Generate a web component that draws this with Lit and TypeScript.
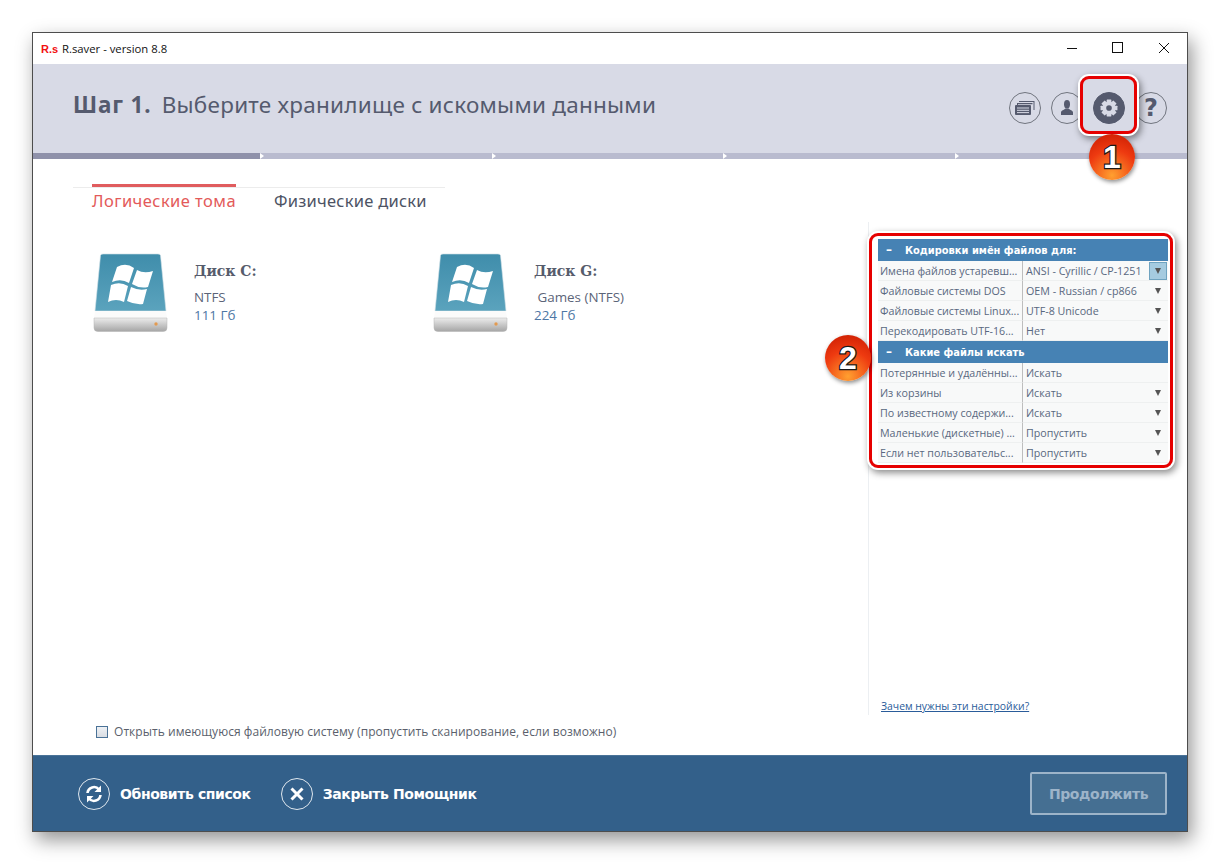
import { LitElement, html, css, svg } from "lit";
import { customElement } from "lit/decorators.js";

const groupA = [
  ["Имена файлов устаревш...", "ANSI - Cyrillic / CP-1251", "sel"],
  ["Файловые системы DOS", "OEM - Russian / cp866", "arrow"],
  ["Файловые системы Linux...", "UTF-8 Unicode", "arrow"],
  ["Перекодировать UTF-16...", "Нет", "arrow"],
];
const groupB = [
  ["Потерянные и удалённы...", "Искать", ""],
  ["Из корзины", "Искать", "arrow"],
  ["По известному содержи...", "Искать", "arrow"],
  ["Маленькие (дискетные) ...", "Пропустить", "arrow"],
  ["Если нет пользовательс...", "Пропустить", "arrow"],
];

const diskIcon = html`<svg class="disk" width="76" height="82" viewBox="0 0 76 82">
  <defs>
    <linearGradient id="dk" x1="0" y1="0" x2="0" y2="1"><stop offset="0" stop-color="#3f8dab"/><stop offset="1" stop-color="#5ba3bd"/></linearGradient>
    <linearGradient id="bs" x1="0" y1="0" x2="0" y2="1"><stop offset="0" stop-color="#ececec"/><stop offset="1" stop-color="#a5a5a5"/></linearGradient>
  </defs>
  <path d="M7.500 2.500 Q7.500 1 10 1 H65 Q67.500 1 67.500 2.500 L73 58 H2 Z" fill="url(#dk)" stroke="#cfdfe6" stroke-width=".6"/>
  <path d="M2 58 H73 L74 65 H1 Z" fill="#fbfbfb"/>
  <path d="M1 65 H74 V75 Q74 78.500 70 78.500 H5 Q1 78.500 1 75 Z" fill="url(#bs)" stroke="#b5b5b5" stroke-width=".5"/>
  <circle cx="63" cy="71" r="1.700" fill="#e39a50"/>
  <g fill="#fff">
    <path d="M24 14 Q33 9 41 15 L36 30 Q28 25 19 29 Z"/>
    <path d="M44 17 Q51 21 60 18 L55 34 Q47 36 39 31 Z"/>
    <path d="M18 32 Q27 28 35 33 L31 49 Q23 45 15 49 Z"/>
    <path d="M38 34 Q46 38 54 36 L50 51 Q42 52 34 48 Z"/>
  </g>
</svg>`;

const gearTeeth = [0, 45, 90, 135, 180, 225, 270, 315].map(
  (a) => svg`<rect x="13.500" y="7" width="5" height="3.500" rx=".5" fill="#d8dae6" transform="rotate(${a} 16 16)"/>`
);

@customElement("app-root")
export class AppRoot extends LitElement {
  static styles = css`
    :host { display: block; width: 1220px; height: 864px; padding: 32px 0 0 32px; box-sizing: border-box; background: #fff; overflow: hidden; font-family: "DejaVu Sans", sans-serif; }
    .win { position: relative; width: 1156px; height: 800px; box-sizing: border-box; border: 1px solid #4d4d4d; background: #fff; display: flex; flex-direction: column; box-shadow: 4px 8px 18px rgba(0,0,0,.42); }
    .titlebar { height: 31px; flex: none; display: flex; align-items: center; padding-left: 8px; font: 11.3px "Open Sans", sans-serif; color: #111; background: #fff; }
    .logo { width: 21px; color: #f21010; font: 700 11px "Liberation Sans", sans-serif; }
    .controls { margin-left: auto; display: flex; height: 100%; align-items: center; }
    .controls svg { display: block; width: 46px; height: 31px; }
    .header { height: 89px; flex: none; background: #d8dae6; display: flex; align-items: center; padding: 0 20px 0 40px; color: #555a6e; }
    .heading { font: 22.5px "Noto Sans", sans-serif; margin-top: -9px; letter-spacing: .25px; }
    .heading b { font-weight: 700; margin-right: 4px; letter-spacing: .9px; }
    .tools { margin-left: auto; display: flex; gap: 10px; margin-top: -2px; }
    .tool { width: 32px; height: 32px; box-sizing: border-box; border: 1px solid #71757f; border-radius: 50%; display: flex; align-items: center; justify-content: center; color: #555a6e; }
    .tool.on { background: #555a6e; border-color: #555a6e; }
    .tool.q { font: 700 24px "DejaVu Sans", sans-serif; }
    .progress { height: 6px; flex: none; background: #b9bbcf; display: flex; }
    .step { width: 231.5px; position: relative; }
    .step.done { background: #8f91aa; width: 227px; }
    .step::after { content: ""; position: absolute; right: -4px; top: 0; width: 0; height: 0; border-left: 4px solid #fff; border-top: 3px solid transparent; border-bottom: 3px solid transparent; }
    .content { flex: 1; display: flex; min-height: 0; }
    .main { flex: 1; display: flex; flex-direction: column; padding: 25px 0 15px 40px; min-width: 0; }
    .tabs { width: 372px; display: flex; padding-left: 19px; border-top: 1px solid #ececec; gap: 38px; box-sizing: border-box; font: 16.5px "Noto Sans", sans-serif; color: #4d5364; margin-top: 3px; height: 27px; }
    .tab { position: relative; line-height: 25px; letter-spacing: .25px; }
    .tab.on { color: #e35a5a; letter-spacing: .45px; }
    .tab.on::before { content: ""; position: absolute; left: 0; right: 0; top: -4px; height: 3px; background: #e05c5e; }
    .disks { display: flex; margin-top: 39px; padding-left: 20px; }
    .diskitem { display: flex; gap: 25px; width: 340px; }
    .disk { display: block; flex: none; }
    .dname { font: 700 14px "DejaVu Serif", serif; color: #575c6c; line-height: 20px; margin-top: 8px; }
    .dinfo { font: 13.4px/18px "Open Sans", sans-serif; margin-top: 7px; color: #5b6478; }
    .dsize { color: #4d76a4; }
    .check { margin-top: auto; margin-left: 23px; display: flex; align-items: center; gap: 6px; font: 12px "Open Sans", sans-serif; color: #5a5f6c; letter-spacing: .05px; }
    .box { width: 10px; height: 10px; border: 1px solid #4a7297; background: linear-gradient(#eef1f5, #d9dde3); flex: none; }
    .side { width: 319px; flex: none; margin: 63px 0 40px; border-left: 1px solid #eceff2; box-sizing: border-box; padding: 17px 20px 0 9px; display: flex; flex-direction: column; }
    .grid { display: grid; grid-template-columns: 144px 146px; width: 290px; background: #f8f9f9; font: 10.7px "Open Sans", sans-serif; color: #586880; }
    .ghead { grid-column: 1 / -1; height: 22px; background: #4682b4; color: #fff; font: 700 9.9px "DejaVu Sans", sans-serif; display: flex; align-items: center; box-sizing: border-box; padding-left: 8px; }
    .ghead .minus { width: 19px; font-size: 12px; }
    .cell { height: 20px; box-sizing: border-box; display: flex; align-items: center; padding-left: 2px; border-bottom: 1px solid #eef0f0; white-space: nowrap; overflow: hidden; }
    .cell.val { border-left: 1px solid #bdbdbd; position: relative; padding-left: 3px; padding-right: 3px; }
    .arrow { margin-left: auto; margin-right: 4px; width: 0; height: 0; border-left: 3.5px solid transparent; border-right: 3.5px solid transparent; border-top: 6px solid #555; }
    .sel { margin-left: auto; margin-right: -2px; width: 18px; height: 18px; background: #a5cbe0; border: 1px solid #6fa3c0; box-sizing: border-box; display: flex; align-items: center; justify-content: center; }
    .sel i { display: block; width: 0; height: 0; border-left: 3.5px solid transparent; border-right: 3.5px solid transparent; border-top: 6px solid #555; }
    .link { margin-top: auto; font: 10.4px "Open Sans", sans-serif; color: #2a5c9a; text-decoration: underline; padding: 0 0 2px 3px; }
    .footer { height: 76px; flex: none; background: #33608a; border-top: 1px solid #4a7398; box-sizing: border-box; display: flex; align-items: center; padding: 0 20px 0 45px; color: #fff; font: 700 14px "DejaVu Sans", sans-serif; letter-spacing: -.4px; }
    .fbtn { display: flex; align-items: center; gap: 10px; margin-right: 30px; }
    .ring { width: 32px; height: 32px; border: 1.5px solid #dfe7ee; border-radius: 50%; box-sizing: border-box; display: flex; align-items: center; justify-content: center; }
    .next { margin-left: auto; width: 137px; height: 43px; box-sizing: border-box; border: 2px solid #9db4c9; border-radius: 2px; background: #456f92; color: #9db4c9; display: flex; align-items: center; justify-content: center; }
    .mark { position: absolute; box-sizing: border-box; border: 3px solid #e60000; border-radius: 9px; box-shadow: 0 0 0 2px #fff, 2px 3px 7px 2px rgba(0,0,0,.45); }
    .mark.one { left: 1047px; top: 43px; width: 57px; height: 58px; }
    .mark.two { left: 836px; top: 200px; width: 304px; height: 235px; }
    .badge { position: absolute; width: 46px; height: 46px; border-radius: 50%; background: radial-gradient(circle at 50% 90%, #ffa030 0, #ee3a10 55%, #c71a00 100%); box-shadow: 1px 2px 4px rgba(0,0,0,.45); display: flex; align-items: center; justify-content: center; font: 700 32px "Liberation Sans", sans-serif; color: #fff; -webkit-text-stroke: 2.5px #1a1a1a; paint-order: stroke fill; }
    .badge.one { left: 1056px; top: 101px; }
    .badge.two { left: 792px; top: 302px; }
  `;

  private rows(list: string[][]) {
    return list.map(
      ([a, b, k]) => html`<div class="cell">${a}</div>
        <div class="cell val">${b}${k === "sel"
          ? html`<span class="sel"><i></i></span>`
          : k === "arrow"
          ? html`<span class="arrow"></span>`
          : ""}</div>`
    );
  }

  render() {
    return html`<div class="win">
      <div class="titlebar">
        <span class="logo">R.s</span><span>R.saver - version 8.8</span>
        <div class="controls">
          <svg viewBox="0 0 46 31"><path d="M18 15.500H28" stroke="#111" fill="none"/></svg>
          <svg viewBox="0 0 46 31"><rect x="17.500" y="9.500" width="10" height="10" stroke="#111" fill="none"/></svg>
          <svg viewBox="0 0 46 31"><path d="M18 10L28 20M28 10L18 20" stroke="#111" fill="none"/></svg>
        </div>
      </div>
      <div class="header">
        <div class="heading"><b>Шаг 1.</b> Выберите хранилище с искомыми данными</div>
        <div class="tools">
          <div class="tool"><svg width="20" height="14" viewBox="0 0 20 14" fill="#555a6e"><path d="M4 0H19.500V9H18.500V1H4Z"/><path d="M2 2H17.500V3.200H3V11H2Z"/><rect x="0" y="4" width="16" height="10" rx="1"/><path d="M2 7H14M2 9.300H14M2 11.600H14" stroke="#d8dae6" stroke-width="1"/></svg></div>
          <div class="tool"><svg width="12" height="15" viewBox="0 0 12 15" fill="#555a6e"><ellipse cx="6" cy="4.200" rx="3" ry="4.200"/><path d="M0 15V12.500C0 10.500 3 10 4.500 8.500H7.500C9 10 12 10.500 12 12.500V15Z"/></svg></div>
          <div class="tool on"><svg width="32" height="32" viewBox="0 0 32 32">${gearTeeth}<circle cx="16" cy="16" r="5" fill="none" stroke="#d8dae6" stroke-width="4"/></svg></div>
          <div class="tool q">?</div>
        </div>
      </div>
      <div class="progress">
        <div class="step done"></div><div class="step"></div><div class="step"></div><div class="step"></div>
      </div>
      <div class="content">
        <div class="main">
          <div class="tabs">
            <div class="tab on">Логические тома</div>
            <div class="tab">Физические диски</div>
          </div>
          <div class="disks">
            <div class="diskitem">${diskIcon}<div>
              <div class="dname">Диск C:</div>
              <div class="dinfo">NTFS<br /><span class="dsize">111 Гб</span></div>
            </div></div>
            <div class="diskitem">${diskIcon}<div>
              <div class="dname">Диск G:</div>
              <div class="dinfo">&nbsp;Games (NTFS)<br /><span class="dsize">224 Гб</span></div>
            </div></div>
          </div>
          <div class="check"><span class="box"></span>Открыть имеющуюся файловую систему (пропустить сканирование, если возможно)</div>
        </div>
        <div class="side">
          <div class="grid">
            <div class="ghead"><span class="minus">–</span>Кодировки имён файлов для:</div>
            ${this.rows(groupA)}
            <div class="ghead"><span class="minus">–</span>Какие файлы искать</div>
            ${this.rows(groupB)}
          </div>
          <div class="link">Зачем нужны эти настройки?</div>
        </div>
      </div>
      <div class="footer">
        <div class="fbtn"><span class="ring"><svg width="20" height="20" viewBox="0 0 20 20" fill="none" stroke="#fff" stroke-width="2.600"><path d="M3.500 9A6.500 6.500 0 0 1 15 5.500"/><path d="M16.500 11A6.500 6.500 0 0 1 5 14.500"/><path d="M17 1.500V8H10.500Z" fill="#fff" stroke="none"/><path d="M3 18.500V12H9.500Z" fill="#fff" stroke="none"/></svg></span>Обновить список</div>
        <div class="fbtn"><span class="ring"><svg width="16" height="16" viewBox="0 0 16 16" fill="none" stroke="#fff" stroke-width="3"><path d="M2.500 2.500L13.500 13.500M13.500 2.500L2.500 13.500"/></svg></span>Закрыть Помощник</div>
        <div class="next">Продолжить</div>
      </div>
      <div class="mark one"></div>
      <div class="mark two"></div>
      <div class="badge one">1</div>
      <div class="badge two">2</div>
    </div>`;
  }
}
